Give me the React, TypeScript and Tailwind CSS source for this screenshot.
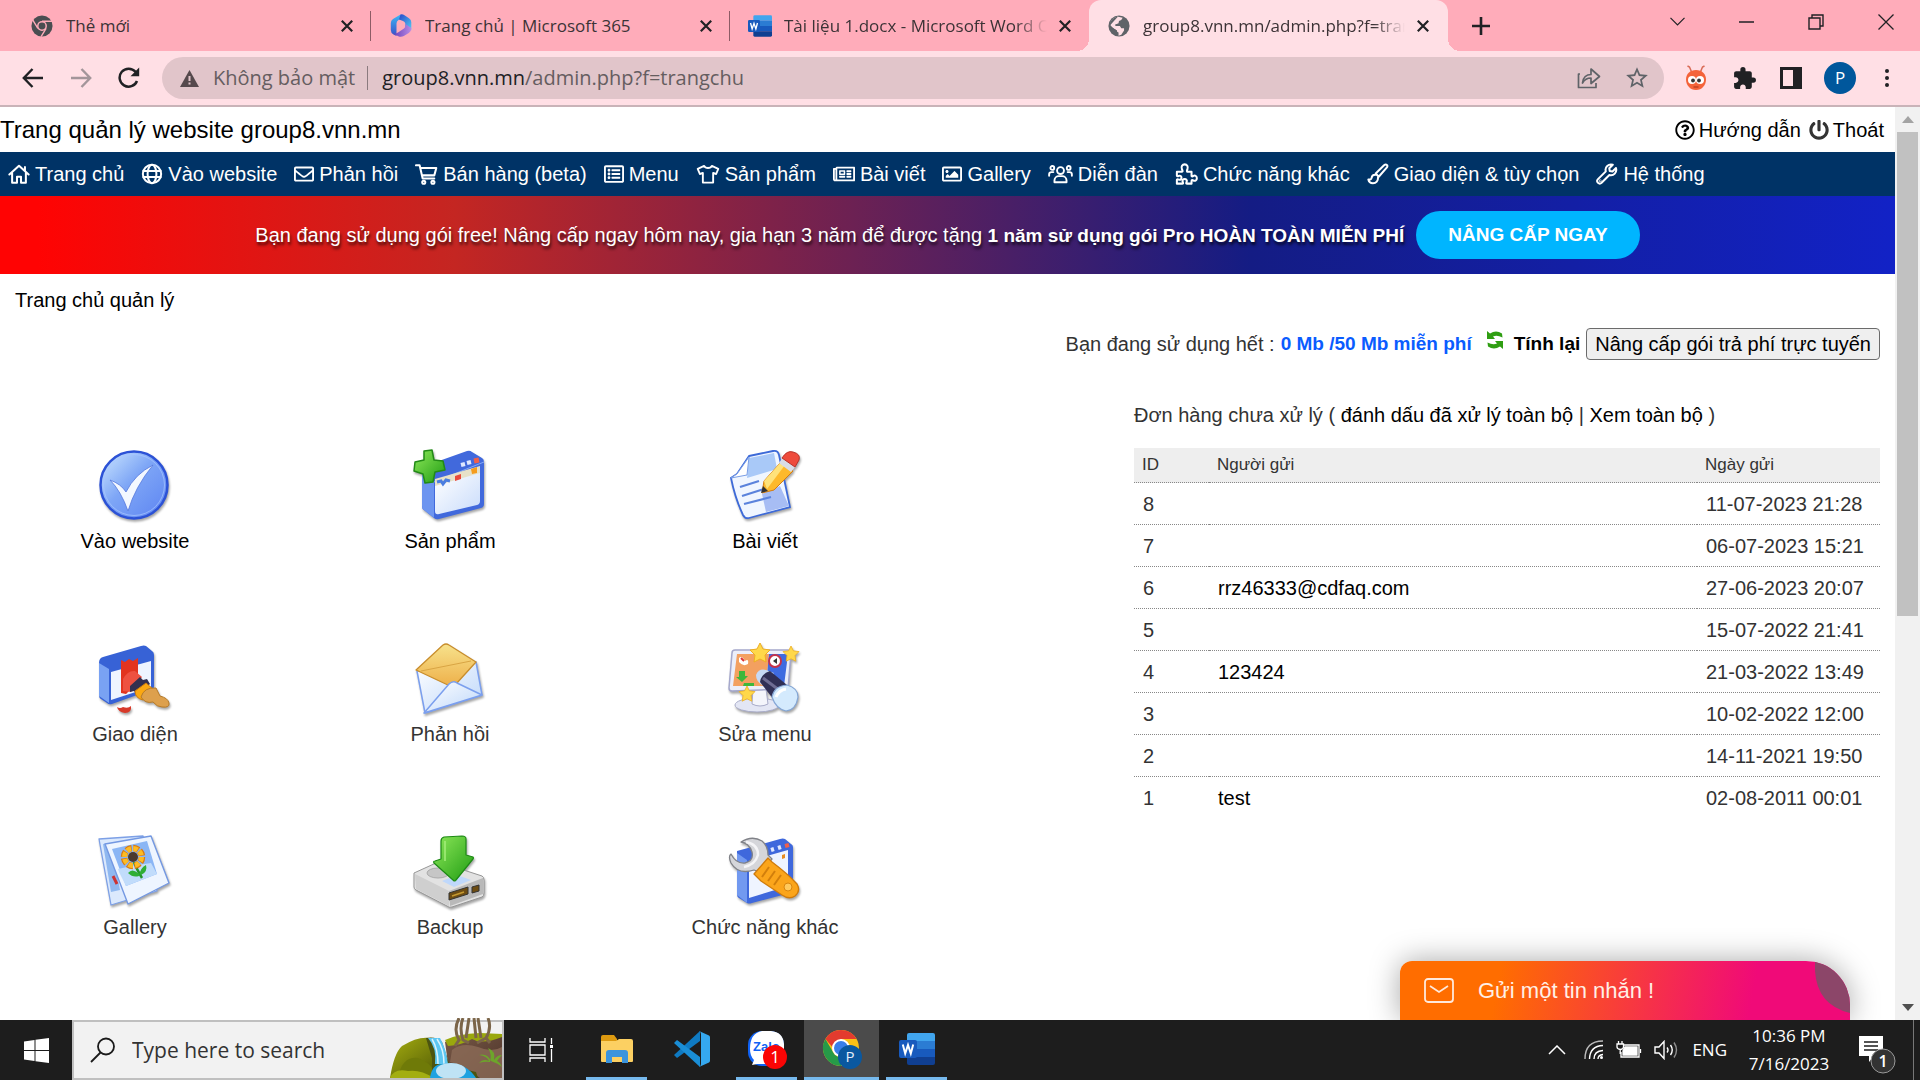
import type { ReactNode } from "react";
import {
  FaRegEnvelope,
  FaRegListAlt,
  FaRegNewspaper,
  FaRegImage,
  FaRegQuestionCircle,
  FaPowerOff,
} from "react-icons/fa";
import { MdExtension, MdStarBorder } from "react-icons/md";

const ui = "font-['Open_Sans','Noto_Sans',sans-serif]";

/* ---------- outline icons for the admin menu ---------- */

function Line({ children, w = 22, vw = 24 }: { children: ReactNode; w?: number; vw?: number }) {
  return (
    <svg
      width={w}
      height="22"
      viewBox={`0 0 ${vw} 24`}
      fill="none"
      stroke="currentColor"
      strokeWidth="2.2"
      strokeLinejoin="round"
      strokeLinecap="round"
      className="shrink-0"
      aria-hidden="true"
    >
      {children}
    </svg>
  );
}

const HouseIcon = () => (
  <Line>
    <path d="M1.5 12.5 12 3l10.500 9.500M4.500 10.500V21.500h5.300v-6.500h4.400v6.500h5.300V10.500M18.500 4.500v4" />
  </Line>
);
const GlobeIcon = () => (
  <Line>
    <circle cx="12" cy="12" r="10" />
    <ellipse cx="12" cy="12" rx="4.800" ry="10" />
    <path d="M2.500 8.700h19M2.500 15.300h19" />
  </Line>
);
const CartIcon = () => (
  <Line w={23} vw={25}>
    <path d="M1 2.500h4L8.300 17H21M5.800 5.500h17.400L21 13.500H7.600" />
    <circle cx="9.500" cy="21" r="1.700" />
    <circle cx="19.500" cy="21" r="1.700" />
  </Line>
);
const ShirtIcon = () => (
  <Line w={24} vw={28}>
    <path d="M9.500 2.500 2 6l2.500 6 3.500-1.300V22h12V10.700l3.500 1.300L26 6l-7.500-3.500c-1.500 3.300-7.500 3.300-9 0Z" />
  </Line>
);
const UsersIcon = () => (
  <Line w={25} vw={29}>
    <circle cx="14.500" cy="8" r="4" />
    <path d="M7.500 21.500v-2c0-3 2.500-5 5-5h4c2.500 0 5 2 5 5v2Z" />
    <circle cx="5" cy="5" r="2.200" />
    <circle cx="24" cy="5" r="2.200" />
    <path d="M1.300 14v-1.500c0-1.700 1.200-2.700 2.900-2.700h2M27.700 14v-1.500c0-1.700-1.200-2.700-2.900-2.700h-2" />
  </Line>
);
const PuzzleIcon = () => (
  <Line w={23} vw={25}>
    <path d="M2 9.500h5.500c1.300 0 .6-1.500 0-2.600C6.300 4 8 1.500 10.500 1.500S14.600 4 13.500 6.900c-.6 1.100-1 2.600.3 2.600H18v4.300c0 1.300 1.300.8 2 .3 2-1 3.800.3 3.800 2.500s-1.800 3.500-3.800 2.500c-.7-.5-2-.8-2 .4v3h-5c-1.300 0-.7-1.200-.3-2 .8-1.800-.5-3-2.200-3s-3 1.200-2.200 3c.4.8 1 2-.3 2H2v-4c0-1.300 1.300-.8 2-.4 1.700.8 3-.4 3-2s-1.300-2.800-3-2c-.7.4-2 .8-2-.4Z" />
  </Line>
);
const BrushIcon = () => (
  <Line>
    <path d="M21.800 2.300c-1-1-2.300-.6-3.200.2L9.500 11.500l3.300 3.500 8.700-10c.7-.8 1.100-2 .3-2.700ZM9.300 12.800c-2.800-.2-4 1.500-4.300 3.500-.2 1.500-1.500 2-3.500 1.700.5 2.500 2.500 4 5 4 3.500 0 5.700-2.400 5.500-6.200" />
  </Line>
);
const WrenchIcon = () => (
  <Line>
    <path d="M21.800 5.500 18 9.300l-3-.5-.5-3 3.800-3.900c-4.600-1.300-9 2.300-7.600 7.200l-8.500 8.500c-1.200 1.200-1.200 2.800 0 4 1.100 1 2.800 1 3.900 0l8.500-8.500c4.700 1.300 8.600-2.900 7.200-7.600Z" />
    <circle cx="4.600" cy="19.300" r=".3" />
  </Line>
);

/* ---------- browser and desktop drawings ---------- */

const WordIcon = ({ size }: { size: number }) => (
  <svg width={size} height={size} viewBox="0 0 36 36" aria-hidden="true">
    <path d="M10 2h24a2 2 0 0 1 2 2v6H8V4a2 2 0 0 1 2-2Z" fill="#41a5ee" />
    <path d="M8 10h28v8H8Z" fill="#2b7cd3" />
    <path d="M8 18h28v8H8Z" fill="#185abd" />
    <path d="M8 26h28v6a2 2 0 0 1-2 2H10a2 2 0 0 1-2-2Z" fill="#103f91" />
    <rect x="0" y="9" width="18" height="18" rx="2" fill="#185abd" />
    <path d="m3.800 13.500 2.400 9 2.800-8.500 2.800 8.500 2.400-9" fill="none" stroke="#fff" strokeWidth="2" />
  </svg>
);

const ChromeGray = () => (
  <svg width="22" height="22" viewBox="0 0 24 24" aria-hidden="true">
    <circle cx="12" cy="12" r="11.500" fill="#4a4d51" />
    <path d="M12 6.800h11M7.500 14.600 2 5.500M16.500 14.600 11 23.500" stroke="#ffacba" strokeWidth="1.500" />
    <circle cx="12" cy="12" r="5.400" fill="#ffacba" />
    <circle cx="12" cy="12" r="3.800" fill="#4a4d51" />
  </svg>
);

const M365 = () => (
  <svg width="22" height="24" viewBox="0 0 22 24" aria-hidden="true">
    <defs>
      <linearGradient id="m1" x1="0" y1="0" x2="0" y2="1">
        <stop offset="0" stopColor="#3bb8f5" />
        <stop offset="1" stopColor="#3a4fc8" />
      </linearGradient>
      <linearGradient id="m2" x1="0" y1="0" x2="1" y2="1">
        <stop offset="0" stopColor="#2a45c9" />
        <stop offset="1" stopColor="#4fd0f5" />
      </linearGradient>
      <linearGradient id="m3" x1="0" y1="0" x2="1" y2="0">
        <stop offset="0" stopColor="#6a3fb8" />
        <stop offset="1" stopColor="#b98ae6" />
      </linearGradient>
    </defs>
    <path d="M10.500.5 3 5Q.8 6.500.8 9v7q0 3 2.700 4.500l3 1.500V9.500Q6.500 7 8.500 6l5-3Z" fill="url(#m1)" />
    <path d="M10.500.5q2-.5 4 .7l4.500 3q2.300 1.500 2.300 4v8l-6-3V9.500Q15 7.500 13 7L9 5.500Z" fill="url(#m2)" />
    <path d="M21.300 14q0 3.500-2.500 5l-5 3q-2.800 1.500-5.500.2L3 19.500q3 .5 5-1l6-4Q15.800 13 15.500 10Z" fill="url(#m3)" />
  </svg>
);

const GlobeGray = () => (
  <svg width="22" height="22" viewBox="0 0 24 24" aria-hidden="true">
    <circle cx="12" cy="12" r="11.500" fill="#5f6368" />
    <path
      d="M10 1.500 16 3q-1 3-4 3.500l-.5 2.500q-2 1-3.500 1v2h5l1.500 2.500h3V17l-3 4.500-3 1V19q-2-.5-2-2.500l-2-1q-3-1.500-5-4.500M10 2C5 3 2.500 7 2.500 10.500"
      fill="#ffdfe5"
      stroke="none"
    />
    <path d="M11 1.500Q3 3 1.500 11q3 4 6 4.500l2 1.500v4.500Q3 20 1.500 12" fill="#5f6368" />
  </svg>
);

const Cross = () => (
  <svg width="12" height="12" viewBox="0 0 12 12" stroke="#202124" strokeWidth="2.200" aria-hidden="true">
    <path d="m.8.8 10.400 10.400M11.200.8.8 11.200" />
  </svg>
);

function Tab({ icon, title, active, sep, fade }: { icon: ReactNode; title: string; active?: boolean; sep?: boolean; fade?: boolean }) {
  return (
    <div
      className={
        active
          ? "relative flex h-full w-[359px] items-center rounded-t-xl bg-[#ffdfe5] pr-[19px] pl-[18px] before:absolute before:bottom-0 before:-left-3 before:size-3 before:bg-[radial-gradient(circle_at_0_0,transparent_12px,#ffdfe5_12px)] after:absolute after:-right-3 after:bottom-0 after:size-3 after:bg-[radial-gradient(circle_at_100%_0,transparent_12px,#ffdfe5_12px)]"
          : "flex h-full w-[359px] items-center pr-0 pl-[18px]"
      }
    >
      <span className="flex w-6 shrink-0 justify-center">{icon}</span>
      <span
        className={
          fade
            ? "ml-3 flex-1 overflow-hidden text-[17px] whitespace-nowrap text-[#3c3336] [mask-image:linear-gradient(to_right,#000_88%,transparent)]"
            : "ml-3 flex-1 overflow-hidden text-[17px] whitespace-nowrap text-[#3c3336]"
        }
      >
        {title}
      </span>
      <button aria-label="Đóng thẻ" className="ml-3 shrink-0">
        <Cross />
      </button>
      {!active && <span className={sep ? "ml-[17px] h-[30px] w-px bg-[#8d5b65]" : "ml-[17px] h-[30px] w-px"} />}
    </div>
  );
}

function TabStrip() {
  return (
    <div className="flex h-[51px] shrink-0 items-center bg-[#ffacba] pl-3">
      <Tab icon={<ChromeGray />} title="Thẻ mới" sep />
      <Tab icon={<M365 />} title="Trang chủ | Microsoft 365" sep />
      <Tab icon={<WordIcon size={24} />} title="Tài liệu 1.docx - Microsoft Word Online" fade />
      <Tab icon={<GlobeGray />} title="group8.vnn.mn/admin.php?f=trangchu" active fade />
      <button aria-label="Thẻ mới" className="ml-6">
        <svg width="18" height="18" viewBox="0 0 18 18" stroke="#202124" strokeWidth="2.600" aria-hidden="true">
          <path d="M9 0v18M0 9h18" />
        </svg>
      </button>
      <div className="mr-[26px] mb-2 ml-auto flex items-center gap-[54px] text-[#202124]">
        <button aria-label="Tìm kiếm thẻ">
          <svg width="15" height="9" viewBox="0 0 15 9" fill="none" stroke="currentColor" strokeWidth="1.200"><path d="m.5.800 7 7 7-7" /></svg>
        </button>
        <button aria-label="Thu nhỏ">
          <svg width="15" height="16" viewBox="0 0 15 16" stroke="currentColor" strokeWidth="1.500"><path d="M0 8h15" /></svg>
        </button>
        <button aria-label="Khôi phục">
          <svg width="16" height="16" viewBox="0 0 16 16" fill="none" stroke="currentColor" strokeWidth="1.400"><path d="M1 4h11v11H1ZM4 4V1h11v11h-3" /></svg>
        </button>
        <button aria-label="Đóng">
          <svg width="16" height="16" viewBox="0 0 16 16" stroke="currentColor" strokeWidth="1.300"><path d="m.500.500 15 15M15.500.500l-15 15" /></svg>
        </button>
      </div>
    </div>
  );
}

function Toolbar() {
  return (
    <div className="flex h-14 shrink-0 items-center border-b-2 border-[#c9b3b8] bg-[#ffdfe5] pr-[31px] pl-[22px] text-[#202124]">
      <div className="flex w-[140px] items-center gap-[26px]">
        <button aria-label="Quay lại">
          <svg width="22" height="20" viewBox="0 0 22 20" fill="none" stroke="currentColor" strokeWidth="2.400"><path d="M21 10H2M10.500 1 1.800 10l8.700 9" /></svg>
        </button>
        <button aria-label="Tiến" className="text-[#a3959a]">
          <svg width="22" height="20" viewBox="0 0 22 20" fill="none" stroke="currentColor" strokeWidth="2.400"><path d="M1 10h19M11.500 1l8.700 9-8.700 9" /></svg>
        </button>
        <button aria-label="Tải lại">
          <svg width="22" height="22" viewBox="0 0 22 22" fill="none" stroke="currentColor" strokeWidth="2.500"><path d="M19 14A9 9 0 1 1 17.500 4.800L20 7.500" /><path d="M21.200.5v8.700h-8.700Z" fill="currentColor" stroke="none" /></svg>
        </button>
      </div>
      <div className="flex h-[42px] flex-1 items-center rounded-full bg-[#e1c5ca] pr-3.5 pl-[18px] text-xl">
        <svg width="19" height="17" viewBox="0 0 19 17" aria-hidden="true"><path d="M9.500 0 19 17H0Z" fill="#55494c" /><path d="M9.500 6v5M9.500 12.500v2" stroke="#e1c5ca" strokeWidth="2" /></svg>
        <span className="ml-3.5 whitespace-nowrap text-[#655d60]">Không bảo mật</span>
        <span className="mr-3.5 ml-3 h-6 w-px bg-[#8a7a7e]" />
        <span className="text-[#202124]">group8.vnn.mn</span>
        <input
          aria-label="Địa chỉ"
          defaultValue="/admin.php?f=trangchu"
          className="min-w-0 flex-1 bg-transparent p-0 text-[#655d60] outline-none"
        />
        <button aria-label="Chia sẻ" className="mr-[23px]">
          <svg width="24" height="22" viewBox="0 0 24 22" fill="none" stroke="#5f6368" strokeWidth="1.700"><path d="M3 7H1.500v13.500H19V16M5.500 16C6 10.500 9.500 7.500 14 7.500V2l8.500 7.500L14 16.500V11c-4 0-6.500 1.500-8.500 5Z" strokeLinejoin="round" /></svg>
        </button>
        <button aria-label="Đánh dấu trang"><MdStarBorder size={26} className="text-[#5f6368]" /></button>
      </div>
      <div className="ml-5 flex items-center">
        <svg width="24" height="26" viewBox="0 0 24 26" aria-hidden="true">
          <path d="M8 8 5.500 2 3.500 1M16 8l2.500-6 2-1" stroke="#d96a55" strokeWidth="1.500" fill="none" />
          <path d="M12 5c6 0 10 4 10 9.500S18 25 12 25 2 20 2 14.500 6 5 12 5Z" fill="#f4633a" />
          <circle cx="8" cy="15" r="4" fill="#fff" /><circle cx="16" cy="15" r="4" fill="#fff" />
          <circle cx="9" cy="15.500" r="1.900" fill="#333" /><circle cx="15" cy="15.500" r="1.900" fill="#333" />
          <path d="M9.500 22h5" stroke="#a83317" />
        </svg>
        <button aria-label="Tiện ích" className="ml-6"><MdExtension size={25} /></button>
        <button aria-label="Bảng bên" className="ml-[23px]">
          <svg width="22" height="22" viewBox="0 0 22 22"><path d="M0 0h22v22H0ZM3 3v16h10V3Z" fill="currentColor" fillRule="evenodd" /></svg>
        </button>
        <button className="ml-[22px] flex size-8 items-center justify-center rounded-full bg-[#00579c] text-[17px] text-white">P</button>
        <button aria-label="Menu" className="ml-[29px] flex flex-col gap-[3px]">
          <span className="size-1 rounded-full bg-current" />
          <span className="size-1 rounded-full bg-current" />
          <span className="size-1 rounded-full bg-current" />
        </button>
      </div>
    </div>
  );
}

/* ---------- dashboard artwork ---------- */

function Art({ children }: { children: ReactNode }) {
  return (
    <svg width="72" height="72" viewBox="0 0 72 72" className="overflow-visible drop-shadow-[1px_2px_1px_rgba(0,0,0,0.35)]" aria-hidden="true">
      {children}
    </svg>
  );
}

const CheckArt = () => (
  <Art>
    <defs>
      <linearGradient id="c1" x1="0" y1="0" x2="1" y2="1">
        <stop offset="0" stopColor="#cfe9ff" />
        <stop offset=".45" stopColor="#7ea6f6" />
        <stop offset="1" stopColor="#5c83f2" />
      </linearGradient>
    </defs>
    <circle cx="35" cy="35" r="33.500" fill="url(#c1)" stroke="#2c52d6" strokeWidth="2.500" />
    <circle cx="35" cy="35" r="30.500" fill="none" stroke="#a9c8ff" strokeWidth="1" opacity=".7" />
    <path d="M11 30q11 4 16 12 9-18 27-27-18 22-25 46-7-20-18-31Z" fill="#f3f8ff" stroke="#5578dd" strokeWidth=".8" />
  </Art>
);
const ProductArt = () => (
  <Art>
    <defs>
      <linearGradient id="w1" x1="0" y1="0" x2="1" y2="1">
        <stop offset="0" stopColor="#fff" />
        <stop offset="1" stopColor="#c9dcfb" />
      </linearGradient>
      <linearGradient id="g1" x1="0" y1="0" x2="1" y2="1">
        <stop offset="0" stopColor="#8ee85a" />
        <stop offset="1" stopColor="#1f9c12" />
      </linearGradient>
    </defs>
    <path d="M8 17 53 1q3-1 5 1l10 6q2 1 2 4v42q0 3-3 4L25 69q-3 1-5-1L10 60q-2-1-2-4Z" fill="#4169dc" />
    <path d="M8 19v37q0 3 2 4l10 8V32Z" fill="#6d95f0" />
    <path d="M20 32 70 12" stroke="#86a9f6" strokeWidth="1" />
    <path d="m21 29 45-13v8L21 37Z" fill="#e7e1c8" />
    <path d="m21 36 45-13v28q0 3-3 4l-38 9q-4 1-4-3Z" fill="url(#w1)" />
    <path d="m23 32 4-1 2 3 3-4 4 1" stroke="#4a7de0" strokeWidth="3" fill="none" />
    <path d="m41 26 6-2v5l-6 2Z" fill="#e8493a" />
    <path d="m57 19 6-2v6l-5 1Z" fill="#f59c1e" />
    <path d="m47 15 4-1M53 13l4-1" stroke="#dfe8ff" strokeWidth="4" />
    <path d="m60 11 5-1" stroke="#f0604a" strokeWidth="5" />
    <path d="m10 1 8-1 2 10 9 1 2 9-10 2-2 10-8 1-2-9-9-3 1-9 9-2Z" fill="url(#g1)" stroke="#228a17" strokeWidth="1.500" strokeLinejoin="round" />
  </Art>
);
const ArticleArt = () => (
  <Art>
    <path d="M20 6 44 1q5-1 6 4l11 52L20 68q-4 1-6-3Q6 48 2 28l6-4Z" fill="#f0f6ff" stroke="#3d6ad8" strokeWidth="1.800" />
    <path d="m20 8 25-5 3 16-30 9Z" fill="#a9c9f8" />
    <path d="m2 28 16-3 2-18L8 24Z" fill="#fff" stroke="#7a9ee6" strokeWidth="1" />
    <path d="m33 44 18-8 9 20-23 6Z" fill="#a7bdf4" />
    <path d="m11 37 19-6M13 46l22-7M15 54l27-7" stroke="#5b83dc" strokeWidth="2.200" />
    <path d="m52 12 12 9-19 19-12 3 2-12Z" fill="#fdb92b" stroke="#d47c13" strokeWidth="1" />
    <path d="m52 12 4 3-18 24-3-8Z" fill="#ffe27a" />
    <path d="m32 43 2-7 5 5Z" fill="#333" />
    <path d="m50 13 4-6 13 9-5 6Z" fill="#d9dde6" />
    <path d="M53 8q5-8 11-6 8 2 6 8l-4 7Z" fill="#ee4b3c" stroke="#b8322a" strokeWidth="1" />
  </Art>
);
const ThemeArt = () => (
  <Art>
    <path d="M0 20q0-5 4-6L42 3q3-1 5 0l6 5q2 1 2 4v31q0 3-3 4L13 61q-3 1-5-1l-6-4q-2-1-2-4Z" fill="#3762d6" />
    <path d="M0 20v33l10 7V26Z" fill="#79a2f3" />
    <path d="m12 29 40-11v26L12 57Z" fill="#eef4ff" />
    <path d="m22 17 4 2 4-3 4 2 5-3v30l-9 3-3 3-5-1Z" fill="#e2341f" />
    <path d="M24 36q5-9 12-8l7 6-11 15-8-1Z" fill="#ee5140" />
    <path d="m31 43 10-9 3 3 4-1 3 5-13 11-3-4-4 1Z" fill="#33304f" />
    <path d="m36 48 11-8 7 6-10 11q-8-2-8-9Z" fill="#fba812" stroke="#cf7b0a" strokeWidth="1" />
    <path d="M42 54q3-10 15-9l4 8q8 2 9 7 1 5-7 4-5 0-9-5-8 2-12-5Z" fill="#dda04d" stroke="#b57a29" strokeWidth="1" />
    <path d="M18 64q3 2 6 0 5 2 8-1 1 7-6 7-7-1-8-6Z" fill="#d83a2a" />
  </Art>
);
const MailArt = () => (
  <Art>
    <defs>
      <linearGradient id="e1" x1="0" y1="0" x2="0" y2="1">
        <stop offset="0" stopColor="#f7e28c" />
        <stop offset="1" stopColor="#eeb04a" />
      </linearGradient>
      <linearGradient id="e2" x1="0" y1="0" x2="1" y2="1">
        <stop offset="0" stopColor="#fff" />
        <stop offset="1" stopColor="#bcd6fa" />
      </linearGradient>
    </defs>
    <path d="M3 28 62 19l6 33-57 18Z" fill="url(#e2)" stroke="#7b9fee" strokeWidth="1.500" strokeLinejoin="round" />
    <path d="M2 27 29 2q3-2 6 0l27 17-20 22-6 2Z" fill="url(#e1)" stroke="#c88d2c" strokeWidth="1.300" strokeLinejoin="round" />
    <path d="m7 28 50-10" stroke="#d9a544" strokeWidth="1" />
    <path d="m10 70 25-29q4-4 8-1l25 12Z" fill="url(#e2)" stroke="#7b9fee" strokeWidth="1.500" strokeLinejoin="round" />
  </Art>
);
const Star = ({ x, y, s }: { x: number; y: number; s: number }) => (
  <path
    transform={`translate(${x} ${y}) scale(${s})`}
    d="M0-10 3-4l7 1-5 5 1 7-6-3-6 3 1-7-5-5 7-1Z"
    fill="#ffd84a"
    stroke="#eeae22"
    strokeWidth="1"
    strokeLinejoin="round"
  />
);
const MenuArt = () => (
  <Art>
    <ellipse cx="28" cy="62" rx="22" ry="7" fill="#e3e6f4" stroke="#a9acc9" />
    <path d="M24 46h13l2 15q-8 4-16 0Z" fill="#f4f5fb" stroke="#a9acc9" />
    <path d="M6 7h53q3 0 3 3l-3 36-56 2q-3 0-3-3L3 10q0-3 3-3Z" fill="#eceef9" stroke="#a5a8cc" strokeWidth="1.500" />
    <path d="M8 11h32L37 43H4Z" fill="#f3a060" />
    <path d="M40 11h19l-4 32H37Z" fill="#3f6be0" />
    <circle cx="46" cy="18" r="6" fill="#fff" stroke="#c6324a" strokeWidth="2" />
    <path d="m44 18 4-3v6Z" fill="#333" />
    <path d="M10 15q3-3 6 3 4-3 3 3-5 3-9-2Z" fill="#fff" />
    <path d="m12 15 3 3" stroke="#d33" strokeWidth="2" />
    <path d="M10 28h6v5h3l-6 6-6-5h3ZM15 40h10v3H14Z" fill="#3db73b" />
    <Star x={31} y={10} s={1} />
    <Star x={62} y={11} s={0.8} />
    <Star x={18} y={51} s={0.8} />
    <path d="M27 32q3-7 10-5l8 3-12 12q-6-4-6-10Z" fill="#c6d9f5" />
    <path d="M31 39q1-8 10-11l17 14-13 15Z" fill="#302f55" />
    <path d="m34 35 20 15" stroke="#6e6c93" strokeWidth="3" />
    <path d="M43 54q2-11 15-12 11 3 11 12-2 13-12 14-10-2-14-14Z" fill="#d4eafd" stroke="#84a6d5" strokeWidth="1.200" />
    <path d="M47 54q3-7 10-8" stroke="#fff" strokeWidth="3" fill="none" />
  </Art>
);
const GalleryArt = () => (
  <Art>
    <path d="m0 3 44-3 14 55-46 14Z" fill="#dbe9fd" stroke="#7da0e6" strokeWidth="1.300" strokeLinejoin="round" />
    <path d="m4 8 8-1 9 47-9 2Z" fill="#8fb8f0" />
    <path d="m14 40 4 8" stroke="#c33" strokeWidth="3" />
    <path d="m6 8 46-8 18 47-41 21Z" fill="#eef5ff" stroke="#7398e2" strokeWidth="1.400" strokeLinejoin="round" />
    <path d="m13 13 35-8 10 33-31 12Z" fill="#8bb6f5" />
    <path d="m20 36-1-3q17-4 33-6l6 11-31 12Z" fill="#c1dcfb" />
    <path d="M35 26q3 8 8 16" stroke="#24962a" strokeWidth="2.500" fill="none" />
    <path d="M39 37q-6-5-10 0 5 5 11 3 1-8 7-11 2 7-5 10Z" fill="#2fae35" />
    <circle cx="34" cy="21" r="9" fill="none" stroke="#d97b12" strokeWidth="6.500" strokeDasharray="5.500 1.560" />
    <circle cx="34" cy="21" r="8.500" fill="none" stroke="#fdbb23" strokeWidth="5" strokeDasharray="4.500 2.170" />
    <circle cx="34" cy="21" r="5" fill="#4c3a2e" />
  </Art>
);
const BackupArt = () => (
  <Art>
    <path d="m0 37 22-10q3-1 6 0l40 13q2 1 2 4v13q0 3-2 4L38 71q-3 1-5-1L2 54q-2-1-2-3Z" fill="#e2e2e2" stroke="#979797" strokeWidth="1" />
    <path d="m1 38 34 17v15L2 53Z" fill="#cfcfcf" />
    <path d="m35 55 34-13v16L36 70Z" fill="#b9b9b9" />
    <ellipse cx="24" cy="37" rx="11" ry="5" fill="#c6c6c6" stroke="#aaa" />
    <path d="m28 45 15-6 14 5-17 7Z" fill="#bfd8fb" />
    <path d="m35 57 19-6v7l-19 6ZM58 51l7-2v6l-7 2Z" fill="#6d4c12" stroke="#333" strokeWidth="1" />
    <path d="m38 60 12-4" stroke="#c69a30" strokeWidth="1.500" />
    <path d="M27 5q0-3 3-4l18-1q4 0 4 3v16l7 2q1 1 0 2L42 44q-1 2-3 0L20 27q-1-2 1-2l6-2Z" fill="url(#g1)" stroke="#1d8a14" strokeWidth="1.200" strokeLinejoin="round" />
    <path d="M31 5v20" stroke="#a9f07f" strokeWidth="2" opacity=".7" />
  </Art>
);
const ToolsArt = () => (
  <Art>
    <path d="m8 15 43-12q3-1 5 0l6 5q2 1 2 3v42q0 3-3 4L23 67q-3 1-5 0l-8-5q-2-1-2-4Z" fill="#3f68dc" />
    <path d="M8 17v42l10 8V24Z" fill="#7299f0" />
    <path d="m20 25 39-11v36L20 62Z" fill="#eff4ff" />
    <path d="m42 14 3-1M49 12l3-1" stroke="#dfe8ff" strokeWidth="4" />
    <path d="m56 10 4-1" stroke="#f0604a" strokeWidth="4" />
    <path d="m53 19 3-1v4l-3 1Z" fill="#e78b20" />
    <path d="M12 6Q23-1 33 5q6 5 6 14l4 4-12 13-6-2Q9 39 2 27q-3-7 0-9 5 10 14 9 9-2 7-11Q20 7 12 6Z" fill="#d5d6da" stroke="#808288" strokeWidth="1.300" strokeLinejoin="round" />
    <path d="M17 6q12 2 12 13-3 10-14 12" stroke="#f5f5f7" strokeWidth="2.500" fill="none" />
    <path d="m25 38 14-16 4 4q16 12 25 22 4 7-2 12-6 4-13-1L32 45Z" fill="#fba51b" stroke="#cf7b0c" strokeWidth="1.300" strokeLinejoin="round" />
    <path d="m33 41 7-10M39 45l7-10M45 49l7-10" stroke="#d27f0c" strokeWidth="2" />
    <circle cx="59" cy="51" r="4" fill="#ffc95c" stroke="#d9860f" />
  </Art>
);

const tiles: { label: string; art: ReactNode; dark?: boolean }[] = [
  { label: "Vào website", art: <CheckArt />, dark: true },
  { label: "Sản phẩm", art: <ProductArt />, dark: true },
  { label: "Bài viết", art: <ArticleArt />, dark: true },
  { label: "Giao diện", art: <ThemeArt /> },
  { label: "Phản hồi", art: <MailArt /> },
  { label: "Sửa menu", art: <MenuArt /> },
  { label: "Gallery", art: <GalleryArt /> },
  { label: "Backup", art: <BackupArt /> },
  { label: "Chức năng khác", art: <ToolsArt /> },
];

const nav: [ReactNode, string][] = [
  [<HouseIcon />, "Trang chủ"],
  [<GlobeIcon />, "Vào website"],
  [<FaRegEnvelope size={20} />, "Phản hồi"],
  [<CartIcon />, "Bán hàng (beta)"],
  [<FaRegListAlt size={20} />, "Menu"],
  [<ShirtIcon />, "Sản phẩm"],
  [<FaRegNewspaper size={22} />, "Bài viết"],
  [<FaRegImage size={20} />, "Gallery"],
  [<UsersIcon />, "Diễn đàn"],
  [<PuzzleIcon />, "Chức năng khác"],
  [<BrushIcon />, "Giao diện & tùy chọn"],
  [<WrenchIcon />, "Hệ thống"],
];

const orders: [string, string, string][] = [
  ["8", "", "11-07-2023 21:28"],
  ["7", "", "06-07-2023 15:21"],
  ["6", "rrz46333@cdfaq.com", "27-06-2023 20:07"],
  ["5", "", "15-07-2022 21:41"],
  ["4", "123424", "21-03-2022 13:49"],
  ["3", "", "10-02-2022 12:00"],
  ["2", "", "14-11-2021 19:50"],
  ["1", "test", "02-08-2011 00:01"],
];

function Orders() {
  return (
    <section className="w-[746px] shrink-0">
      <h2 className="text-[#333]">
        Đơn hàng chưa xử lý ( <a href="#mark" className="text-black">đánh dấu đã xử lý toàn bộ</a> |{" "}
        <a href="#all" className="text-black">Xem toàn bộ</a> )
      </h2>
      <table className="mt-[21px] w-full border-separate border-spacing-0 text-left text-[#333]">
        <thead className="bg-[#eee] text-[17px]">
          <tr className="h-[35px]">
            <th className="w-[75px] border-b border-dotted border-[#888] px-2 font-normal">ID</th>
            <th className="border-b border-dotted border-[#888] px-2 font-normal">Người gửi</th>
            <th className="w-[183px] border-b border-dotted border-[#888] px-2 font-normal">Ngày gửi</th>
          </tr>
        </thead>
        <tbody className="[&>tr:last-child>td]:border-0">
          {orders.map(([id, from, date]) => (
            <tr key={id} className="h-[42px]">
              <td className="border-b border-dotted border-[#888] px-[9px]">{id}</td>
              <td className="border-b border-dotted border-[#888] px-[9px]">
                {from && <a href={`#order-${id}`} className="text-black">{from}</a>}
              </td>
              <td className="border-b border-dotted border-[#888] px-[9px] whitespace-nowrap">{date}</td>
            </tr>
          ))}
        </tbody>
      </table>
    </section>
  );
}

function ChatBar() {
  return (
    <button className="absolute right-[45px] bottom-0 flex h-[59px] w-[450px] items-center overflow-hidden rounded-tl-xl rounded-tr-[44px] bg-[linear-gradient(100deg,#ff6d00_22%,#f00a78_78%)] pl-6 text-left text-white shadow-[0_0_30px_rgba(0,0,0,0.35)]">
      <svg width="30" height="25" viewBox="0 0 30 25" fill="none" stroke="#ffe9dc" strokeWidth="1.800" aria-hidden="true">
        <rect x="1" y="1" width="28" height="23" rx="3" />
        <path d="m6 8 9 6 9-6" />
      </svg>
      <span className="ml-6 text-[22px] text-[#ffefe6]">Gửi một tin nhắn !</span>
      <svg width="35" height="52" viewBox="0 0 35 52" className="ml-auto self-start" aria-hidden="true">
        <path d="M0 0h35v52Q2 44 0 10Z" fill="#8c4669" />
      </svg>
    </button>
  );
}

function Page() {
  return (
    <div className="relative min-w-0 flex-1 overflow-hidden bg-white font-['Liberation_Sans',Arial,sans-serif] text-[20px] leading-6 text-black">
      <header className="flex h-[45px] items-center justify-between pr-[11px]">
        <h1 className="text-2xl">Trang quản lý website group8.vnn.mn</h1>
        <div className="flex items-center gap-2">
          <a href="#help" className="flex items-center gap-1"><FaRegQuestionCircle size={20} />Hướng dẫn</a>
          <a href="#logout" className="flex items-center gap-1"><FaPowerOff size={20} className="text-[#333]" />Thoát</a>
        </div>
      </header>
      <nav className="flex h-11 items-center gap-[17px] bg-[#003366] pl-2 text-white">
        {nav.map(([icon, label]) => (
          <a key={label} href="#section" className="flex items-center gap-[5px] whitespace-nowrap">
            {icon}
            {label}
          </a>
        ))}
      </nav>
      <div className="flex h-[78px] items-center justify-center gap-3 bg-[linear-gradient(to_right,#ff0303_0%,#ff0303_2%,#c42622_24%,#141c84_66%,#1222c6_100%)] text-white">
        <p className="[text-shadow:1px_3px_3px_rgba(0,0,0,0.7)]">
          Bạn đang sử dụng gói free! Nâng cấp ngay hôm nay, gia hạn 3 năm để được tặng{" "}
          <b className="text-[19px]">1 năm sử dụng gói Pro HOÀN TOÀN MIỄN PHÍ</b>
        </p>
        <button className="h-12 rounded-full bg-[#00b5ff] px-8 text-[19px] font-bold">NÂNG CẤP NGAY</button>
      </div>
      <main className="px-[15px]">
        <p className="pt-3.5">Trang chủ quản lý</p>
        <div className="mt-4 flex items-center justify-end">
          <span className="text-[#333]">Bạn đang sử dụng hết :</span>
          <b className="ml-1.5 text-[19px] text-[#0a5cff]">0 Mb /50 Mb miễn phí</b>
          <svg width="18" height="18" viewBox="0 0 18 18" className="mb-2 ml-3.5" fill="#2f9e12" aria-hidden="true">
            <path d="M1 8V0l3 2.500q6-4 12 0l.5 4Q11 3.500 7 5.500L9 8ZM17 10v8l-3-2.500q-6 4-12 0l-.5-4Q7 14.500 11 12.500L9 10Z" />
          </svg>
          <a href="#recount" className="ml-2.5 text-[19px] font-bold">Tính lại</a>
          <button className="ml-1.5 h-8 rounded-sm border border-[#6b6b6b] bg-[#efefef] px-2">Nâng cấp gói trả phí trực tuyến</button>
        </div>
        <div className="mt-[43px] flex items-start justify-between">
          <div className="mt-[47px] grid grid-cols-[240px_240px_240px] gap-x-[75px] gap-y-[90px]">
            {tiles.map((t) => (
              <a key={t.label} href="#open" className={t.dark ? "flex flex-col items-center gap-[7px] text-black" : "flex flex-col items-center gap-[7px] text-[#333]"}>
                {t.art}
                {t.label}
              </a>
            ))}
          </div>
          <Orders />
        </div>
      </main>
      <ChatBar />
    </div>
  );
}

function ScrollBar() {
  return (
    <div className="flex w-[25px] shrink-0 flex-col items-center bg-[#f1f1f1]" aria-hidden="true">
      <svg width="12" height="25" viewBox="0 0 12 25"><path d="m6 9 6 7H0Z" fill="#a3a3a3" /></svg>
      <div className="h-[53%] w-[21px] bg-[#c1c1c1]" />
      <svg width="12" height="25" viewBox="0 0 12 25" className="mt-auto"><path d="m6 16 6-7H0Z" fill="#505050" /></svg>
    </div>
  );
}

/* ---------- taskbar ---------- */

function TaskApp({ label, running, active, children }: { label: string; running?: boolean; active?: boolean; children: ReactNode }) {
  return (
    <button aria-label={label} className={active ? "flex h-full w-[75px] flex-col items-center bg-[#4b4b4b]" : "flex h-full w-[75px] flex-col items-center"}>
      <span className="flex flex-1 items-center">{children}</span>
      <span className={running ? (active ? "h-[3px] w-full bg-[#76b9ed]" : "h-[3px] w-[61px] bg-[#76b9ed]") : "h-[3px]"} />
    </button>
  );
}

function SearchArt() {
  return (
    <svg width="112" height="60" viewBox="0 0 112 60" className="pointer-events-none absolute right-0 bottom-0" aria-hidden="true">
      <defs>
        <linearGradient id="s1" x1="0" y1="0" x2="1" y2="1"><stop offset="0" stopColor="#a5ad10" /><stop offset="1" stopColor="#4c5505" /></linearGradient>
        <linearGradient id="s2" x1="0" y1="0" x2="1" y2="1"><stop offset="0" stopColor="#7a5a48" /><stop offset="1" stopColor="#4a3228" /></linearGradient>
      </defs>
      <path d="M55 24q12-6 30-8h27v44H60Z" fill="url(#s2)" />
      <path d="M55 22q12-6 35-7l22 1v3q-20 8-30 2-10 6-24 7Z" fill="#9aa80d" />
      <path d="M62 32q10-8 26-3 14 6 24 0v31H90q-20-14-30-16Z" fill="#8c6b58" opacity=".8" />
      <path d="M69 0q-6 12 0 22l-4 6M73 0q-4 10 0 22l6 3M79 0l-3 20M84 0l2 20M88 0l3 20M98 0q4 10-2 20l-9 5M96 20l4 5" stroke="#7b6549" strokeWidth="3" fill="none" />
      <path d="M0 60q4-25 12-32 16-10 28-8l14 10-6 20 2 10Z" fill="url(#s1)" />
      <path d="M8 60q4-22 20-20 16 6 18 20Z" fill="#6f7a08" />
      <path d="M0 60q4-10 18-7 12-2 26 7Z" fill="#a3ae12" />
      <path d="M36 20q10-2 16 4l8 24 26 6 2 6H42V40Z" fill="#4c5410" />
      <path d="M38 20h12q6 10 8 26H45q2-16-7-26Z" fill="#5cc6f2" />
      <path d="M42 21q6 10 6 25M47 21q7 10 7 25" stroke="#d9f3fd" strokeWidth="1.500" fill="none" />
      <path d="M40 60q2-14 12-14 22-4 34 14Z" fill="#1ea2e0" />
      <ellipse cx="61" cy="53" rx="15" ry="8" fill="#bfe3f5" />
      <path d="M101 43q-4-8-12-6 8 1 10 6-6-3-10 2 6-2 11-1 2-8-2-14 8 3 6 12 3-5 8-5-3 3-5 6 3 1 5 6-5-4-11-6Z" fill="#6da52b" />
    </svg>
  );
}

function Taskbar() {
  return (
    <footer className="flex h-[60px] shrink-0 items-center bg-[#1d1d1d] text-white">
      <button aria-label="Start" className="flex w-[72px] justify-center">
        <svg width="25" height="25" viewBox="0 0 25 25" fill="#fff"><path d="M0 3.500 10.500 2v10H0ZM11.500 1.800 25 0v12H11.500ZM0 13h10.500v10L0 21.500ZM11.500 13H25v12l-13.500-1.800Z" /></svg>
      </button>
      <div className="relative flex h-full w-[432px] items-center border-2 border-[#c0c0c0] bg-[#f2f2f2] pl-4">
        <svg width="26" height="26" viewBox="0 0 26 26" fill="none" stroke="#1a1a1a" strokeWidth="1.800" aria-hidden="true"><circle cx="16" cy="9.500" r="8" /><path d="M10.500 15.500 1 25" /></svg>
        <input aria-label="Search" placeholder="Type here to search" className="mt-0.5 ml-4 w-[250px] bg-transparent text-[21px] outline-none placeholder:text-[#333]" />
        <SearchArt />
      </div>
      <button aria-label="Task View" className="flex w-[75px] justify-center">
        <svg width="25" height="24" viewBox="0 0 25 24" fill="none" stroke="#fff" strokeWidth="1.300"><path d="M1 0v4h15V0M1 7h15v10H1ZM1 24v-4h15v4M22.500 0v6M22.500 11v13" /><rect x="21" y="7" width="3" height="3" fill="#fff" stroke="none" /></svg>
      </button>
      <TaskApp label="File Explorer" running>
        <svg width="32" height="28" viewBox="0 0 32 28"><path d="M0 2q0-2 2-2h11l3 4v6H0Z" fill="#dd9a10" /><path d="M0 6h15l3-2h12q2 0 2 2v20q0 1-1 1H1q-1 0-1-1Z" fill="#fcd062" /><path d="M5 28V18q0-3 3-3h16q3 0 3 3v10h-6v-6H11v6Z" fill="#3b94dd" /></svg>
      </TaskApp>
      <TaskApp label="Visual Studio Code">
        <svg width="36" height="36" viewBox="0 0 36 36"><path d="M26 0 0 24l3 3 23-17Z" fill="#0f7ac2" /><path d="m3 9-3 3 26 24V26Z" fill="#1a8ed6" /><path d="m25 0 10 4.500q1 .5 1 2v23q0 1.500-1 2L25 36q2-1 2-3V3q0-2-2-3Z" fill="#35a8ef" /></svg>
      </TaskApp>
      <TaskApp label="Zalo" running>
        <svg width="40" height="40" viewBox="0 0 40 40">
          <rect x="1" y="2" width="36" height="35" rx="14" fill="#0f62f5" />
          <path d="M15 2h9q12 1 13 13v8q-1 11-13 12H10l-5 1 2-5Q3 27 3 20 3 4 15 2Z" fill="#fff" />
          <text x="6" y="22" fontSize="13" fontWeight="700" fill="#0f62f5" fontFamily="Liberation Sans, sans-serif">Zalo</text>
          <circle cx="28" cy="28" r="12" fill="#fa0505" />
          <text x="28" y="34" fontSize="17" fill="#fff" textAnchor="middle" fontFamily="Open Sans, sans-serif">1</text>
        </svg>
      </TaskApp>
      <TaskApp label="Google Chrome" running active>
        <svg width="40" height="40" viewBox="0 0 40 40">
          <circle cx="19" cy="19" r="18" fill="#fbc116" />
          <path d="M3.400 10A18 18 0 0 1 34.600 10H19v18Z" fill="#e33b2e" />
          <path d="M3.400 10A18 18 0 0 0 19 37l8-14-8 5q-6 0-8-5Z" fill="#269a48" />
          <circle cx="19" cy="19" r="9" fill="#fff" /><circle cx="19" cy="19" r="7" fill="#3a7ee8" />
          <circle cx="28" cy="28" r="12" fill="#0a58a0" />
          <text x="28" y="33" fontSize="15" fill="#e4eefa" textAnchor="middle" fontFamily="Open Sans, sans-serif">P</text>
        </svg>
      </TaskApp>
      <TaskApp label="Word" running><WordIcon size={36} /></TaskApp>
      <div className="ml-auto flex h-full items-center">
        <svg width="18" height="10" viewBox="0 0 18 10" fill="none" stroke="#fff" strokeWidth="1.500" aria-hidden="true"><path d="m1 9 8-8 8 8" /></svg>
        <svg width="20" height="20" viewBox="0 0 20 20" fill="none" stroke="#fff" strokeWidth="1.400" className="ml-[18px]" aria-hidden="true"><path d="M1 19Q1 1 19 1" opacity=".7" /><path d="M5.500 19Q6 6 19 5.500M10 19q0-8 9-8.500M14 19q0-4 5-4.500" /><circle cx="17.500" cy="17.500" r="1.500" fill="#fff" stroke="none" /></svg>
        <svg width="26" height="18" viewBox="0 0 26 18" fill="none" stroke="#fff" strokeWidth="1.300" className="ml-3" aria-hidden="true"><path d="M8 4h15v12H5v-5" /><path d="M9 6h12v8H7v-4Z" fill="#fff" /><path d="M24.500 8v4M2.500 0v3M6 0v3M1 3h6.500v3q0 2-3 2.500Q1 8 1 6ZM4.200 8.500V13" /></svg>
        <svg width="24" height="20" viewBox="0 0 24 20" fill="none" stroke="#fff" strokeWidth="1.400" className="ml-3" aria-hidden="true"><path d="M1 7h4l5-5.500v17L5 13H1ZM13 7.500q2 2.500 0 5M16.500 5q3.500 5 0 10" /><path d="M20 2.500q5 7.500 0 15" opacity=".5" /></svg>
        <span className="ml-3.5 text-[17px]">ENG</span>
        <div className="ml-[17px] w-[90px] text-center text-[17px] leading-7">
          <div>10:36 PM</div>
          <div>7/16/2023</div>
        </div>
        <button aria-label="Notifications" className="ml-6 pt-2">
          <svg width="38" height="40" viewBox="0 0 38 40"><path d="M1 2h24v20H16l-5 6v-6H1Z" fill="#fff" /><path d="M6 8h14M6 12h14M6 16h14" stroke="#1d1d1d" strokeWidth="1.400" /><circle cx="25" cy="27" r="12" fill="#333" stroke="#999" /><text x="25" y="32.500" fontSize="16" fontWeight="600" fill="#fff" textAnchor="middle" fontFamily="Open Sans, sans-serif">1</text></svg>
        </button>
        <span className="mr-1.5 ml-[17px] h-full w-px bg-[#777]" />
      </div>
    </footer>
  );
}

export default function App() {
  return (
    <div className={`flex h-screen flex-col overflow-hidden ${ui}`}>
      <TabStrip />
      <Toolbar />
      <div className="flex min-h-0 flex-1">
        <Page />
        <ScrollBar />
      </div>
      <Taskbar />
    </div>
  );
}
